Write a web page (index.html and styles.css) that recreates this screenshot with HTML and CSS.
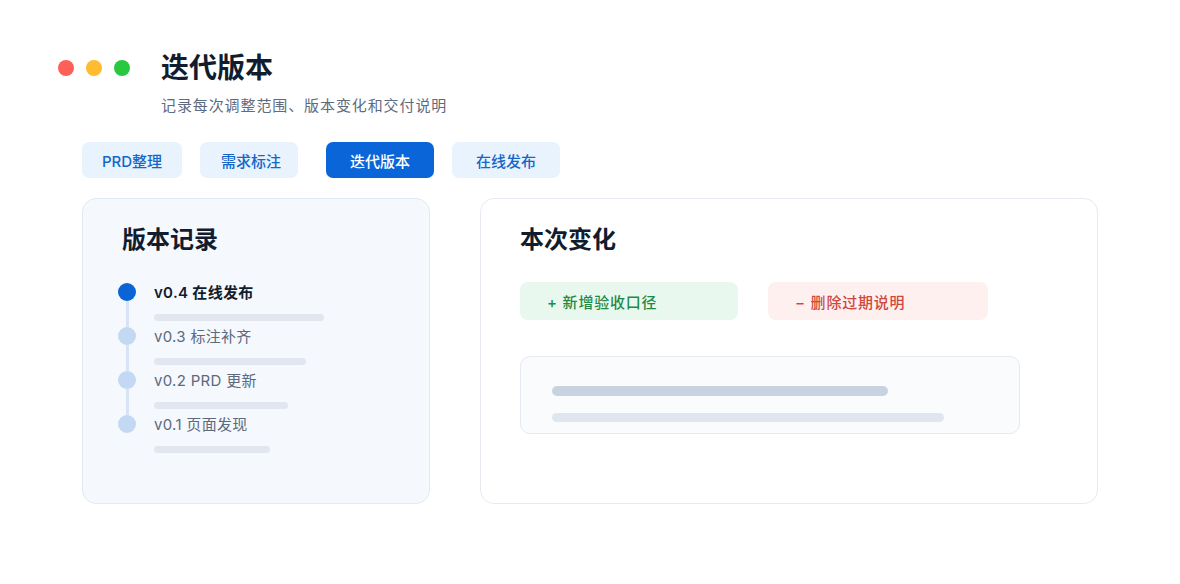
FILE: index.html
```html
<!DOCTYPE html>
<html lang="zh-CN">
<head>
<meta charset="utf-8">
<title>迭代版本</title>
<link rel="stylesheet" href="styles.css">
</head>
<body>
<div class="page">
  <header class="header">
    <div class="dots">
      <span class="dot dot-red"></span>
      <span class="dot dot-yellow"></span>
      <span class="dot dot-green"></span>
    </div>
    <h1 class="title">迭代版本</h1>
  </header>
  <p class="subtitle">记录每次调整范围、版本变化和交付说明</p>

  <nav class="tabs">
    <span class="tab tab-prd">PRD整理</span>
    <span class="tab tab-req">需求标注</span>
    <span class="tab tab-active">迭代版本</span>
    <span class="tab tab-pub">在线发布</span>
  </nav>

  <div class="cards">
    <section class="card card-history">
      <h2 class="card-title">版本记录</h2>
      <ul class="timeline">
        <li class="tl-item tl-current">
          <div class="tl-rail"><span class="tl-dot"></span><span class="tl-line"></span></div>
          <div class="tl-body">
            <div class="tl-label">v0.4 在线发布</div>
            <div class="tl-bar" style="width:170px"></div>
          </div>
        </li>
        <li class="tl-item">
          <div class="tl-rail"><span class="tl-dot"></span><span class="tl-line"></span></div>
          <div class="tl-body">
            <div class="tl-label">v0.3 标注补齐</div>
            <div class="tl-bar" style="width:152px"></div>
          </div>
        </li>
        <li class="tl-item">
          <div class="tl-rail"><span class="tl-dot"></span><span class="tl-line"></span></div>
          <div class="tl-body">
            <div class="tl-label">v0.2 PRD 更新</div>
            <div class="tl-bar" style="width:134px"></div>
          </div>
        </li>
        <li class="tl-item tl-last">
          <div class="tl-rail"><span class="tl-dot"></span></div>
          <div class="tl-body">
            <div class="tl-label">v0.1 页面发现</div>
            <div class="tl-bar" style="width:116px"></div>
          </div>
        </li>
      </ul>
    </section>

    <section class="card card-changes">
      <h2 class="card-title">本次变化</h2>
      <div class="chips">
        <div class="chip chip-add">+ 新增验收口径</div>
        <div class="chip chip-remove">− 删除过期说明</div>
      </div>
      <div class="detail">
        <div class="detail-bar detail-bar-strong" style="width:336px"></div>
        <div class="detail-bar detail-bar-light" style="width:392px"></div>
      </div>
    </section>
  </div>
</div>
</body>
</html>
```

FILE: styles.css
```css
* { box-sizing: border-box; }

html, body {
  margin: 0;
  padding: 0;
  background: #ffffff;
}

body {
  font-family: "Inter", "Noto Sans CJK SC", sans-serif;
  color: #111d2e;
}

.page {
  padding-top: 50px;
}

.header {
  display: flex;
  align-items: center;
  gap: 31px;
  height: 36px;
  padding-left: 58px;
}

.dots {
  display: flex;
  gap: 12px;
}

.dot {
  width: 16px;
  height: 16px;
  border-radius: 50%;
  display: block;
}
.dot-red { background: #fe5f57; }
.dot-yellow { background: #febc2e; }
.dot-green { background: #28c840; }

.title {
  margin: 0;
  font-size: 28px;
  line-height: 36px;
  font-weight: 700;
  color: #111d2e;
}

.subtitle {
  margin: 8px 0 0 161px;
  font-size: 15px;
  line-height: 24px;
  letter-spacing: 0.9px;
  color: #5d6b7e;
}

.tabs {
  display: flex;
  gap: 18px;
  margin-top: 24px;
  padding-left: 82px;
}

.tab {
  height: 36px;
  display: flex;
  align-items: center;
  justify-content: center;
  border-radius: 7px;
  background: #e9f3fe;
  color: #1466c8;
  font-size: 15px;
  font-weight: 500;
}
.tab-prd { width: 100px; }
.tab-req { width: 98px; padding-left: 4px; }
.tab-active {
  width: 108px;
  margin-left: 10px;
  background: #0a66d8;
  color: #ffffff;
}
.tab-pub { width: 108px; }

.cards {
  display: flex;
  gap: 50px;
  margin-top: 20px;
  padding-left: 82px;
}

.card {
  height: 306px;
  border-radius: 14px;
  border: 1px solid #e3e9f2;
  padding: 25px 0 0 39px;
}

.card-history {
  width: 348px;
  background: #f5f8fd;
}

.card-changes {
  width: 618px;
  background: #ffffff;
  border-color: #e6eaf0;
}

.card-title {
  margin: 0;
  font-size: 24px;
  line-height: 32px;
  font-weight: 700;
  color: #111d2e;
}

.timeline {
  list-style: none;
  margin: 25px 0 0 -4px;
  padding: 0;
}

.tl-item {
  display: flex;
  gap: 18px;
  height: 44px;
}

.tl-rail {
  width: 18px;
  display: flex;
  flex-direction: column;
  align-items: center;
  padding-top: 2px;
}

.tl-dot {
  width: 18px;
  height: 18px;
  border-radius: 50%;
  background: #c3d8f2;
  flex: none;
}

.tl-current .tl-dot { background: #0a64d6; }

.tl-line {
  width: 3px;
  height: 26px;
  background: #d6e5f6;
  flex: none;
}

.tl-body {
  display: flex;
  flex-direction: column;
}

.tl-label {
  height: 22px;
  line-height: 23px;
  font-size: 15px;
  letter-spacing: 0.3px;
  color: #5b6a7e;
  white-space: nowrap;
}

.tl-current .tl-label {
  color: #111d2e;
  font-weight: 600;
}

.tl-bar {
  margin-top: 11px;
  height: 7px;
  border-radius: 4px;
  background: #e2e7ef;
}

.chips {
  display: grid;
  grid-template-columns: 218px 220px;
  column-gap: 30px;
  margin-top: 26px;
}

.chip {
  height: 38px;
  border-radius: 8px;
  display: flex;
  align-items: center;
  padding-left: 27px;
  font-size: 15px;
  letter-spacing: 0.8px;
  font-weight: 500;
}

.chip-add {
  background: #e9f8ee;
  color: #1d8a46;
}

.chip-remove {
  background: #fef0ef;
  color: #d0473d;
}

.detail {
  margin-top: 36px;
  width: 500px;
  height: 78px;
  border-radius: 10px;
  border: 1px solid #e4eaf2;
  background: #f9fbfd;
  padding: 29px 0 0 31px;
}

.detail-bar {
  border-radius: 5px;
}

.detail-bar-strong {
  height: 10px;
  background: #c8d3e2;
}

.detail-bar-light {
  height: 9px;
  margin-top: 17px;
  background: #e0e6f0;
}
```
